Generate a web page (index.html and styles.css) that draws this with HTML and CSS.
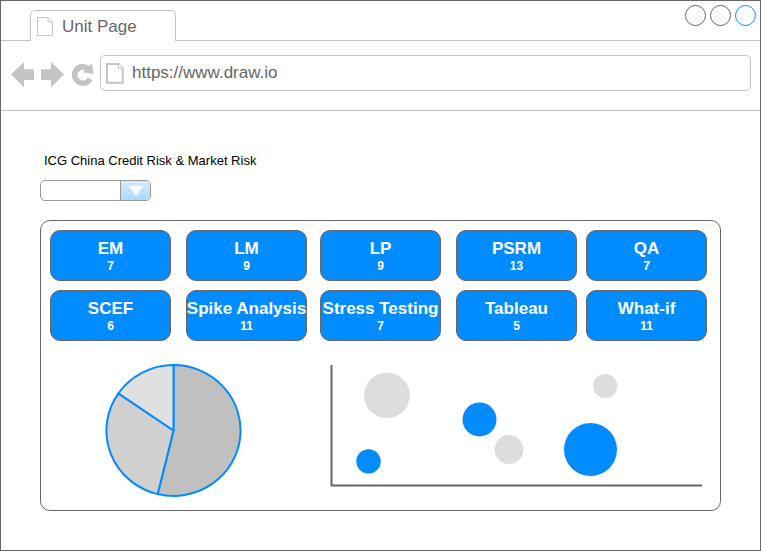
FILE: index.html
```html
<!DOCTYPE html>
<html lang="en">
<head>
<meta charset="utf-8">
<title>Unit Page</title>
<link rel="stylesheet" href="styles.css">
</head>
<body>
<div class="window">
  <header class="tabbar">
    <div class="tab">
      <svg class="tab-icon" width="17" height="20" viewBox="0 0 17 20"><path d="M.5.5H11L15.5 5V18.5H.5ZM11 .5V5H15.5"/></svg>
      <span>Unit Page</span>
    </div>
    <div class="controls">
      <span class="control"></span>
      <span class="control"></span>
      <span class="control active"></span>
    </div>
  </header>
  <nav class="toolbar">
    <svg class="nav-icons" width="84" height="28" viewBox="10 61 84 28">
      <path d="M11 74.5 24 62V69.3H34V80H24V87.3Z"/>
      <path d="M64 74.5 51 62V69.3H41V80H51V87.3Z"/>
      <path d="M93.8 74 91.8 63.3 89.3 66A11 11 0 1 0 92.5 80.2L87.8 77.6A5.4 5.4 0 1 1 85 70.2L82.3 72.2Z"/>
    </svg>
    <div class="address">
      <svg class="page-icon" width="18" height="21" viewBox="0 0 18 21"><path d="M1 1H12.5L16.7 5.3V19.7H1Z"/><path class="fold" d="M12.5 1V5.3H16.7"/></svg>
      <span>https://www.draw.io</span>
    </div>
  </nav>
  <main class="content">
    <h1>ICG China Credit Risk &amp; Market Risk</h1>
    <div class="select"><span class="select-button"><svg width="14" height="10" viewBox="0 0 14 10"><path d="M0 0H14L7 10Z"/></svg></span></div>
    <section class="panel">
      <div class="tiles">
        <div class="tile"><b>EM</b><small>7</small></div>
        <div class="tile"><b>LM</b><small>9</small></div>
        <div class="tile"><b>LP</b><small>9</small></div>
        <div class="tile"><b>PSRM</b><small>13</small></div>
        <div class="tile"><b>QA</b><small>7</small></div>
        <div class="tile"><b>SCEF</b><small>6</small></div>
        <div class="tile"><b>Spike Analysis</b><small>11</small></div>
        <div class="tile"><b>Stress Testing</b><small>7</small></div>
        <div class="tile"><b>Tableau</b><small>5</small></div>
        <div class="tile"><b>What-if</b><small>11</small></div>
      </div>
      <div class="charts">
        <svg class="pie" width="138" height="134" viewBox="105 364 138 134">
          <path class="slice-a" d="M173.5 430.5V365.1A67.2 65.4 0 1 1 157.7 494.1Z"/>
          <path class="slice-b" d="M173.5 430.5 157.7 494.1A67.2 65.4 0 0 1 118.4 393.3Z"/>
          <path class="slice-c" d="M173.5 430.5 118.4 393.3A67.2 65.4 0 0 1 173.5 365.1Z"/>
        </svg>
        <svg class="bubbles" width="373" height="124" viewBox="330 364 373 124">
          <path class="axes" d="M331.5 365V485.5H702"/>
          <g class="muted"><circle cx="387" cy="395.4" r="22.9"/><circle cx="509" cy="449.5" r="14.5"/><circle cx="605.2" cy="386" r="12.1"/></g>
          <g class="accent"><circle cx="368.5" cy="461.4" r="12.2"/><circle cx="479.5" cy="419.4" r="17"/><circle cx="590.5" cy="449.5" r="26.5"/></g>
        </svg>
      </div>
    </section>
  </main>
</div>
</body>
</html>
```
FILE: styles.css
```css
* { box-sizing: border-box; }
body {
  margin: 0;
  background: #fff;
  font-family: "Liberation Sans", Arial, sans-serif;
}
.window {
  width: 761px;
  height: 551px;
  border: 1px solid #666;
  overflow: hidden;
}
svg { display: block; flex: none; }
.tabbar {
  display: flex;
  justify-content: space-between;
  height: 40px;
  padding: 0 4px 0 29px;
  border-bottom: 1px solid #c4c4c4;
}
.tab {
  display: flex;
  align-items: flex-start;
  gap: 8px;
  width: 146px;
  height: 31px;
  margin-top: 9px;
  padding: 6px 0 0 6px;
  border: 1px solid #c4c4c4;
  border-bottom: 0;
  border-radius: 5px 5px 0 0;
  background: #fff;
  color: #666;
  font-size: 17px;
  line-height: 19px;
}
.tab-icon { fill: #fff; stroke: #c4c4c4; }
.controls { display: flex; gap: 4px; padding-top: 4px; }
.control {
  width: 21px;
  height: 21px;
  border: 1px solid #666;
  border-radius: 50%;
}
.control.active { border-color: #008cff; }
.toolbar {
  display: flex;
  gap: 6px;
  height: 70px;
  padding: 14px 9px 0;
  border-bottom: 1px solid #c4c4c4;
}
.nav-icons { margin-top: 6px; fill: #c4c4c4; }
.address {
  display: flex;
  align-items: center;
  gap: 8px;
  flex: 1;
  height: 36px;
  padding-left: 5px;
  border: 1px solid #c4c4c4;
  border-radius: 5px;
  color: #666;
  font-size: 17px;
  line-height: 20px;
}
.page-icon { fill: #fff; stroke: #c4c4c4; stroke-width: 2; }
.page-icon .fold { stroke-width: 1; }
.content { padding: 42px 39px 0; }
h1 {
  height: 16px;
  margin: 0 0 11px 4px;
  color: #000;
  font-size: 13px;
  font-weight: 400;
  line-height: 16px;
}
.select {
  display: flex;
  justify-content: flex-end;
  width: 111px;
  height: 21px;
  border: 1px solid #999;
  border-radius: 5px;
  overflow: hidden;
}
.select-button {
  width: 30px;
  padding: 5px 0 0 8px;
  border-left: 1px solid #999;
  background: linear-gradient(#d8eaff, #aadcff);
}
.select-button path { fill: #fff; }
.panel {
  width: 681px;
  height: 291px;
  margin-top: 19px;
  padding: 9px;
  border: 1px solid #666;
  border-radius: 10px;
}
.tiles {
  display: grid;
  grid-template-columns: 136px 134px 136px 130px 121px;
  row-gap: 9px;
}
.tile {
  display: flex;
  flex-direction: column;
  align-items: center;
  width: 121px;
  height: 51px;
  padding-top: 8px;
  border: 1px solid #666;
  border-radius: 10px;
  background: #008cff;
  color: #fff;
  white-space: nowrap;
}
.tile b { font-size: 17px; line-height: 20px; }
.tile small { font-size: 12px; font-weight: 700; line-height: 15px; }
.charts {
  display: flex;
  gap: 87px;
  padding: 23px 0 0 55px;
}
.pie { stroke: #008cff; stroke-width: 2; stroke-linejoin: round; }
.slice-a { fill: #c0c0c0; }
.slice-b { fill: #d0d0d0; }
.slice-c { fill: #e0e0e0; }
.axes { fill: none; stroke: #666; stroke-width: 2; }
.muted { fill: #ddd; }
.accent { fill: #008cff; }
```
